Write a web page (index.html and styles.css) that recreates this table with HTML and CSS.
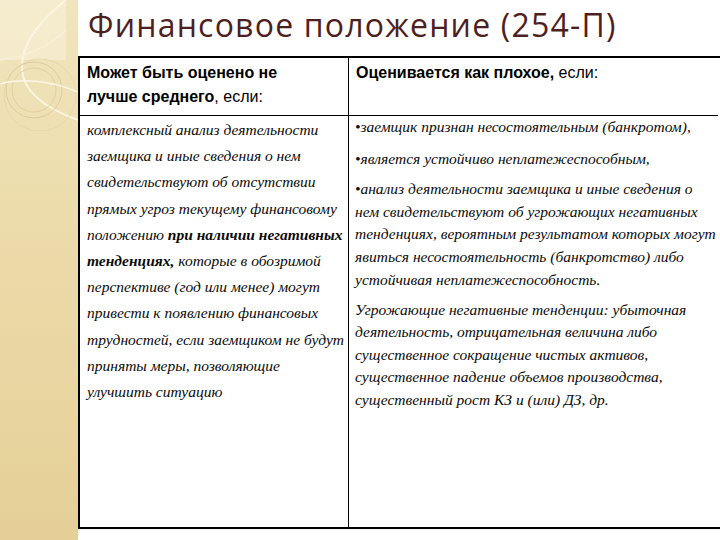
FILE: index.html
```html
<!DOCTYPE html>
<html lang="ru">
<head>
<meta charset="utf-8">
<title>Финансовое положение (254-П)</title>
<link rel="stylesheet" href="styles.css">
</head>
<body>
<div class="slide">
  <aside class="strip">
    <svg class="deco" width="78" height="540" viewBox="0 0 78 540">
      <rect x="0" y="0" width="66" height="60" fill="#f6eed4" opacity="0.7"/>
      <path d="M66 0 C40 20 20 45 22 70 C24 95 50 110 78 120" fill="none" stroke="#fbf5e2" stroke-width="2"/>
      <path d="M0 60 C20 58 45 50 66 30" fill="none" stroke="#f8f0d8" stroke-width="1.5"/>
      <circle cx="34" cy="90" r="28" fill="none" stroke="#d9c591" stroke-width="0.8"/>
      <circle cx="34" cy="90" r="22" fill="none" stroke="#dccb99" stroke-width="0.8"/>
      <circle cx="40" cy="95" r="36" fill="none" stroke="#e4d5a8" stroke-width="0.8"/>
      <path d="M0 84 C20 78 50 80 78 92" fill="none" stroke="#fbf6e6" stroke-width="1.5"/>
    </svg>
  </aside>
  <main class="content">
    <h1 class="title">Финансовое положение (254-П)</h1>
    <div class="grid">
      <div class="cell head head-left"><b>Может быть оценено не<br>лучше среднего</b>, если:</div>
      <div class="cell head head-right"><b>Оценивается как плохое,</b> если:</div>
      <div class="cell body body-left">
        <p class="left-text">комплексный анализ деятельности<br>заемщика и иные сведения о нем<br>свидетельствуют об отсутствии<br>прямых угроз текущему финансовому<br>положению <b>при наличии негативных<br>тенденциях,</b> которые в обозримой<br>перспективе (год или менее) могут<br>привести к появлению финансовых<br>трудностей, если заемщиком не будут<br>приняты меры, позволяющие<br>улучшить ситуацию</p>
      </div>
      <div class="cell body body-right">
        <p class="item first">•заемщик признан несостоятельным (банкротом),</p>
        <p class="item">•является устойчиво неплатежеспособным,</p>
        <p class="item">•анализ деятельности заемщика и иные сведения о<br>нем свидетельствуют об угрожающих негативных<br>тенденциях, вероятным результатом которых могут<br>явиться несостоятельность (банкротство) либо<br>устойчивая неплатежеспособность.</p>
        <p class="item">Угрожающие негативные тенденции: убыточная<br>деятельность, отрицательная величина либо<br>существенное сокращение чистых активов,<br>существенное падение объемов производства,<br>существенный рост КЗ и (или) ДЗ, др.</p>
      </div>
    </div>
    <div class="below"></div>
  </main>
</div>
</body>
</html>
```
FILE: styles.css
```css
html, body {
  margin: 0;
  padding: 0;
  background: #ffffff;
}
.slide {
  display: flex;
  width: 720px;
  height: 540px;
}
.strip {
  width: 78px;
  flex: none;
  background: linear-gradient(180deg, #f1e5be 0%, #ecdcab 40%, #e5cf97 100%);
}
.deco {
  display: block;
}
.content {
  width: 642px;
  flex: none;
  display: flex;
  flex-direction: column;
}
.title {
  margin: 0;
  height: 56px;
  flex: none;
  box-sizing: border-box;
  padding-left: 10px;
  font-family: "Open Sans", "Noto Sans", sans-serif;
  font-weight: 400;
  font-size: 32px;
  letter-spacing: 1.2px;
  line-height: 50px;
  color: #4e1f1f;
  white-space: nowrap;
}
.grid {
  flex: none;
  display: grid;
  grid-template-columns: 269px 369px;
  grid-template-rows: 58px 411px;
  width: 642px;
  border: 2px solid #000;
}
.below {
  flex: 1;
  background: #fff;
  border-top: 1px solid #f2f2f2;
}
.cell {
  box-sizing: border-box;
  overflow: hidden;
}
.head {
  border-bottom: 1px solid #000;
  padding: 3px 6px 0 7px;
  font-family: "Liberation Sans", Arial, sans-serif;
  font-size: 16px;
  line-height: 24px;
  color: #000;
  white-space: nowrap;
}
.head b { font-weight: 700; }
.head-left, .body-left {
  border-right: 1px solid #000;
}
.body {
  font-family: "Liberation Serif", "DejaVu Serif", serif;
  font-style: italic;
  font-size: 15.5px;
  color: #0a0a0a;
  white-space: nowrap;
}
.body-left {
  padding: 1px 4px 0 7px;
}
.body-right {
  padding: 0 0 0 6px;
}
.left-text {
  margin: 0;
  line-height: 26.2px;
}
.item {
  margin: 0 0 7.5px 0;
  line-height: 22.6px;
}
.item.first {
  margin-bottom: 9.5px;
}
```
